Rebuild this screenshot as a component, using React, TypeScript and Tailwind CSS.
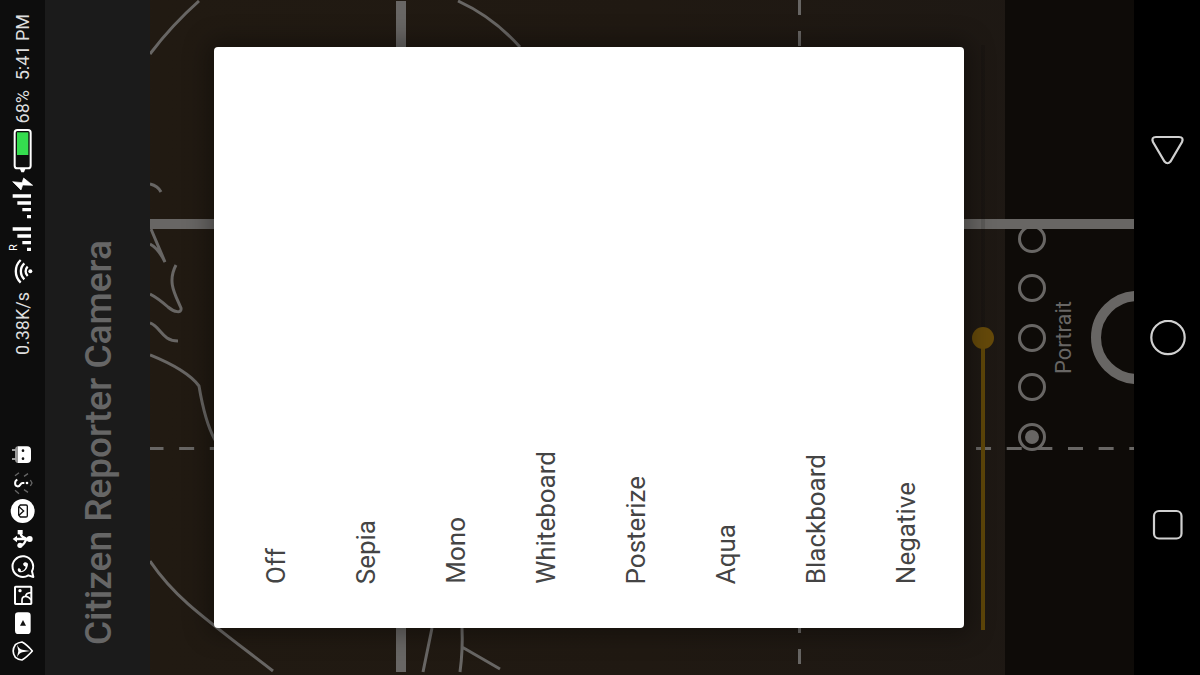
import { useState } from "react";
import type { ReactNode } from "react";

const EFFECTS = ["Off", "Sepia", "Mono", "Whiteboard", "Posterize", "Aqua", "Blackboard", "Negative"];
const SHOTS = ["Shot 5", "Shot 4", "Shot 3", "Shot 2", "Shot 1"];

const sideways = "[writing-mode:vertical-rl] rotate-180 whitespace-nowrap";

function Notice({ children }: { children: ReactNode }) {
  return (
    <svg viewBox="0 0 135 84" className="h-7 w-[45px]" fill="none" stroke="#fff" aria-hidden="true">
      {children}
    </svg>
  );
}

function Notifications() {
  return (
    <div className="flex flex-col">
      <Notice>
        <path d="M54 16v50h-2q-7-2-7-12V28q0-10 7-12z" fill="#999" stroke="none" />
        <path d="M54 16h27q12 0 12 12v26q0 12-12 12H54z" fill="#fff" stroke="none" />
        <path d="M36 27h10M36 54h10" stroke="#ccc" strokeWidth="4" />
        <circle cx="69" cy="29" r="4" fill="#111" stroke="none" />
        <circle cx="69" cy="53" r="4" fill="#111" stroke="none" />
      </Notice>
      <Notice>
        <path d="M52 32c-9 4-9 18 0 20 10 2 8-12 17-10h4" strokeWidth="6" />
        <circle cx="81" cy="42" r="4" fill="#fff" stroke="none" />
        <path d="M45 20l12-9M45 64l12 10M72 22l12-8M72 62l12 8M91 33l5 9-5 9" stroke="#666" strokeWidth="4" />
      </Notice>
      <Notice>
        <circle cx="68" cy="42" r="36" fill="#fff" stroke="none" />
        <path d="M61 24h17q4 0 4 4v28q0 4-4 4H61l-5-6V30z" stroke="#111" strokeWidth="4" />
        <path d="M57 29l14 13-14 13" stroke="#111" strokeWidth="4" />
      </Notice>
      <Notice>
        <path d="M46 42h44M62 23v4q0 4 6 8l12 7M62 61q6 0 10-6l8-13" strokeWidth="7" />
        <path d="M38 42l13-10v20z" fill="#fff" stroke="none" />
        <circle cx="89" cy="42" r="9" fill="#fff" stroke="none" />
        <circle cx="60" cy="61" r="8" fill="#fff" stroke="none" />
        <path d="M53 15h15v13H53z" fill="#fff" stroke="none" />
      </Notice>
      <Notice>
        <path d="M100 72l-4-17a31 31 0 1 0-11 12z" strokeWidth="6" strokeLinejoin="round" />
        <path d="M57 57c-5-4-5-9 0-12l6 5q-1 3 0 5 10-2 14-13-1-3-5-3l-3-6c4-8 13-5 15 0-1 16-12 28-27 24z" fill="#fff" stroke="none" />
      </Notice>
      <Notice>
        <rect x="45" y="17" width="49" height="52" rx="2" strokeWidth="6" />
        <circle cx="60" cy="29" r="5" fill="#fff" stroke="none" />
        <path d="M66 68V57q0-11 11-11 0-10 17-11M77 46q8 0 17 11" strokeWidth="5" />
      </Notice>
      <Notice>
        <rect x="45" y="10" width="47" height="65" rx="10" fill="#fff" stroke="none" />
        <path d="M60 50h18l-9-17z" fill="#111" stroke="none" />
      </Notice>
      <Notice>
        <path d="M46 23q9-7 20-8 15 8 31 27-17 19-31 27-11-1-20-8-13-19 0-38z" strokeWidth="5" strokeLinejoin="round" />
        <path d="M51 23q7 13 16 15l23 4-23 4q-9 2-16 15l4-19z" fill="#fff" stroke="none" />
      </Notice>
    </div>
  );
}

function StatusBar() {
  return (
    <aside className="flex w-[45px] shrink-0 flex-col items-center justify-between bg-[#0d0d0d] pt-[14px] pb-[10px] text-[18px] leading-[22px] text-[#dedede]">
      <div className="flex flex-col items-center">
        <time className={`${sideways} mb-[10px]`}>5:41 PM</time>
        <span className={sideways}>68%</span>
        <svg viewBox="0 380 135 480" className="mt-[3px] h-[160px] w-[45px] text-white" fill="#fff" aria-hidden="true">
          <rect x="44" y="389" width="48" height="115" rx="8" fill="none" stroke="#fff" strokeWidth="6" />
          <rect x="51" y="396" width="34" height="68" fill="#35dd4f" />
          <path d="M60 506h16l-4 10h-8z" />
          <path d="M38 544l25 25 5-15 30 1-27-22-5 14z" stroke="#fff" strokeWidth="2" />
          <path d="M38 582h55v10H38zM52 603h41v10H52zM67 623h26v10H67zM81 644h12v10H81z" />
          <path d="M38 681h55v10H38zM52 702h41v10H52zM67 722h26v10H67zM81 742h12v10H81z" />
          <text x="0" y="0" transform="translate(50 752) rotate(-90)" className="text-[33px]">R</text>
          <circle cx="91" cy="813" r="6" />
          <g fill="none" stroke="#fff" strokeWidth="7">
            <path d="M62 779A47 47 0 0 0 62 847M73 789A33 33 0 0 0 73 837M83 799A19 19 0 0 0 83 827" />
          </g>
        </svg>
        <span className={`${sideways} mt-[5px]`}>0.38K/s</span>
      </div>
      <Notifications />
    </aside>
  );
}

function ViewfinderLines() {
  return (
    <svg
      viewBox="150 0 984 675"
      preserveAspectRatio="none"
      className="pointer-events-none absolute inset-0 h-full w-full"
      fill="none"
      stroke="#686664"
      strokeWidth="3"
      aria-hidden="true"
    >
      <path d="M401 1V672M150 224H1134" strokeWidth="10" />
      <path d="M799.5 0V664" strokeDasharray="15 15.9" />
      <path d="M148.5 448.5H1134" strokeDasharray="15 15.65" />
      <path d="M199 1Q172 25 150 54M458 1Q493 17 520 47" />
      <path d="M150 184Q158 186 161 192M151 229L165 262Q158 248 150 244" />
      <path d="M176 265C167 282 175 294 181 308C182 314 174 312 168 307Q158 298 150 294" />
      <path d="M150 323C161 327 162 341 178 341M150 355Q187 370 199 386Q205 422 215 440" />
      <path d="M150 561C175 598 203 617 273 671" />
      <path d="M432 628L423 672M462 628Q463 650 460 672M462 647L500 669" />
    </svg>
  );
}

function Camera() {
  const [effect, setEffect] = useState("");
  return (
    <main className="relative flex min-w-0 flex-1 overflow-hidden bg-linear-to-r from-[#211a12] via-[#201912] to-[#1d1814]">
      <div className="flex-1" />
      <section className="flex w-[129px] shrink-0 items-center overflow-hidden bg-[#0e0b08]">
        <div className="ml-[13px] flex h-[226px] flex-col justify-between">
          {SHOTS.map((shot) => (
            <input
              key={shot}
              type="radio"
              name="shot"
              aria-label={shot}
              defaultChecked={shot === "Shot 1"}
              className="h-7 w-7 appearance-none rounded-full border-3 border-[#686664] bg-clip-content p-1 checked:bg-[#686664]"
            />
          ))}
        </div>
        <span className={`${sideways} ml-[5px] text-[22px] leading-[26px] text-[#686664]`}>Portrait</span>
        <button type="button" aria-label="Shutter" className="ml-[14px] h-[93px] w-[93px] shrink-0 rounded-full border-10 border-[#686664]" />
      </section>
      <ViewfinderLines />
      <input
        type="range"
        aria-label="Zoom"
        defaultValue={50}
        className="absolute top-[45px] right-[140px] bottom-[45px] w-[22px] appearance-none bg-[linear-gradient(rgba(0,0,0,0.12),rgba(0,0,0,0.12)_50%,#5e4609_50%)] bg-[length:4px_100%] bg-center bg-no-repeat [direction:rtl] [writing-mode:vertical-lr] [&::-webkit-slider-thumb]:h-[22px] [&::-webkit-slider-thumb]:w-[22px] [&::-webkit-slider-thumb]:appearance-none [&::-webkit-slider-thumb]:rounded-full [&::-webkit-slider-thumb]:bg-[#65490a]"
      />
      <div
        role="dialog"
        aria-label="Color effect"
        className="absolute top-[47px] right-[170px] bottom-[47px] left-16 flex rounded-[4px] bg-white pr-[13px] pl-[17px] shadow-[0_0_24px_6px_rgba(0,0,0,0.35)]"
      >
        {EFFECTS.map((name) => (
          <button
            key={name}
            type="button"
            aria-pressed={effect === name}
            onClick={() => setEffect(name)}
            className="flex flex-1 items-end justify-center pb-[44px] text-[26px] leading-[30px] text-[#444]"
          >
            <span className={sideways}>{name}</span>
          </button>
        ))}
      </div>
    </main>
  );
}

function SystemNav() {
  const item = "flex flex-1 items-center justify-center";
  return (
    <nav className="flex w-[66px] shrink-0 flex-col bg-black py-14 pl-[2px]">
      <button type="button" aria-label="Back" className={item}>
        <svg width="36" height="36" viewBox="0 0 36 36" fill="none" stroke="#d0d0d0" strokeWidth="2.2">
          <path d="M6 5H29Q34 5 32 10L20.500 29.500Q17.500 33 14.500 29.500L3 10Q1 5 6 5z" />
        </svg>
      </button>
      <button type="button" aria-label="Home" className={item}>
        <svg width="36" height="36" viewBox="0 0 36 36" fill="none" stroke="#d0d0d0" strokeWidth="2.2">
          <circle cx="18" cy="17.500" r="16.700" />
        </svg>
      </button>
      <button type="button" aria-label="Recent apps" className={item}>
        <svg width="36" height="36" viewBox="0 0 36 36" fill="none" stroke="#d0d0d0" strokeWidth="2.2">
          <rect x="4" y="4" width="27.500" height="27.500" rx="5" />
        </svg>
      </button>
    </nav>
  );
}

export default function App() {
  return (
    <div className="flex h-screen overflow-hidden bg-black font-[Roboto,sans-serif]">
      <StatusBar />
      <header className="flex w-[105px] shrink-0 items-end justify-center bg-[#1b1b1b] pb-[30px] pl-[2px]">
        <h1 className={`${sideways} text-[37px] leading-[44px] font-medium text-[#666]`}>Citizen Reporter Camera</h1>
      </header>
      <Camera />
      <SystemNav />
    </div>
  );
}
